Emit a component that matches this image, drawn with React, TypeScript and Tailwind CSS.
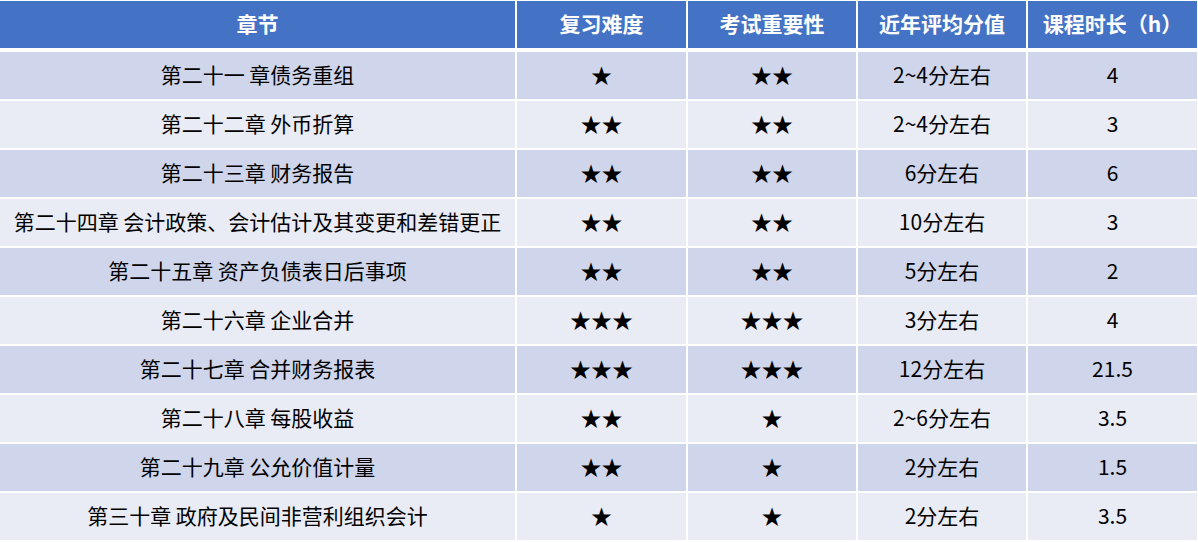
const rows = [
  ["第二十一 章债务重组", "★", "★★", "2~4分左右", "4"],
  ["第二十二章 外币折算", "★★", "★★", "2~4分左右", "3"],
  ["第二十三章 财务报告", "★★", "★★", "6分左右", "6"],
  ["第二十四章 会计政策、会计估计及其变更和差错更正", "★★", "★★", "10分左右", "3"],
  ["第二十五章 资产负债表日后事项", "★★", "★★", "5分左右", "2"],
  ["第二十六章 企业合并", "★★★", "★★★", "3分左右", "4"],
  ["第二十七章 合并财务报表", "★★★", "★★★", "12分左右", "21.5"],
  ["第二十八章 每股收益", "★★", "★", "2~6分左右", "3.5"],
  ["第二十九章 公允价值计量", "★★", "★", "2分左右", "1.5"],
  ["第三十章 政府及民间非营利组织会计", "★", "★", "2分左右", "3.5"],
];

const headers = ["章节", "复习难度", "考试重要性", "近年评均分值", "课程时长（h）"];

export default function App() {
  return (
    <div className="w-[1198px] h-[542px] bg-white pt-px font-['Noto_Sans_CJK_SC','Noto_Sans',sans-serif]">
      <div className="grid grid-cols-[515px_169px_168px_168px_169px] gap-x-[2px]">
        {headers.map((h) => (
          <div
            key={h}
            className="h-[47px] pb-[2px] bg-[#4472c4] text-white font-bold text-[21px] flex items-center justify-center"
          >
            {h}
          </div>
        ))}
      </div>
      <div className="mt-[4px] grid grid-cols-[515px_169px_168px_168px_169px] gap-x-[2px] gap-y-[2px]">
        {rows.map((r, i) =>
          r.map((cell, j) => (
            <div
              key={i + "-" + j}
              className={
                "h-[47px] pb-[2px] flex items-center justify-center text-black text-[21px] " +
                (i % 2 === 0 ? "bg-[#cfd5ea]" : "bg-[#e9ebf5]")
              }
            >
              {cell}
            </div>
          ))
        )}
      </div>
    </div>
  );
}
